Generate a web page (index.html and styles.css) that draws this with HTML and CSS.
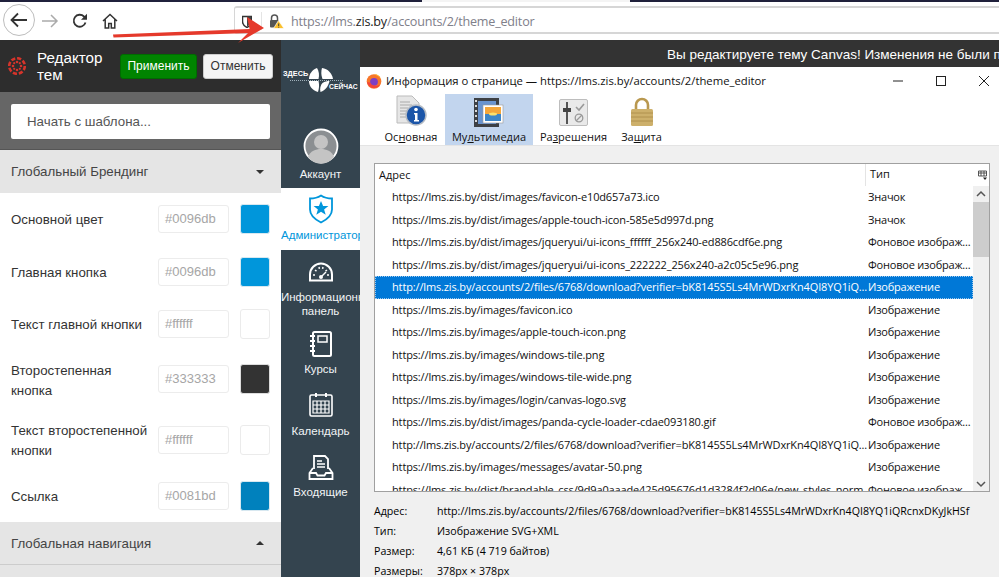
FILE: index.html
```html
<!DOCTYPE html>
<html lang="ru">
<head>
<meta charset="utf-8">
<title>Редактор тем</title>
<link rel="stylesheet" href="styles.css">
</head>
<body>
<div class="screen">
  <div class="strip"><span class="strip-a"></span><span class="strip-gap"></span><span class="strip-b"></span></div>
  <header class="toolbar">
    <button class="back" aria-label="Назад"><svg width="20" height="18" viewBox="0 0 20 18"><path d="M18 9H3M9 2.500 2.500 9 9 15.500" fill="none" stroke="#333" stroke-width="1.800"/></svg></button>
    <svg class="tool forward" width="18" height="16" viewBox="0 0 18 16"><path d="M1 8h15M10 2l6 6-6 6" fill="none" stroke="#aaa" stroke-width="1.500"/></svg>
    <svg class="tool reload" width="16" height="16" viewBox="0 0 16 16"><path d="M13.500 9.500A6 6 0 1 1 12 3.500L14 5" fill="none" stroke="#333" stroke-width="1.800"/><path d="M15 .8v6H9z" fill="#333"/></svg>
    <svg class="tool home" width="16" height="16" viewBox="0 0 16 16"><path d="M1 8l7-6.500L15 8M3.200 6.500V15h3.500v-4.500h2.600V15h3.500V6.500" fill="none" stroke="#333" stroke-width="1.500"/></svg>
    <div class="urlbar">
      <svg class="shield" width="10" height="13" viewBox="0 0 10 13"><path d="M.5 1.500h9v5c0 3-2.500 5-4.500 6-2-1-4.500-3-4.500-6z" fill="none" stroke="#333" stroke-width="1.500"/><path d="M5 1.500h4v5c0 2-1.800 3.800-4 5z" fill="#444"/></svg>
      <span class="urlsep"></span>
      <svg class="lock" width="15" height="15" viewBox="0 0 15 15"><path d="M2.500 6V4a3 3 0 0 1 6 0v2" fill="none" stroke="#555" stroke-width="1.500"/><rect x="1" y="6" width="9" height="7.500" rx="1" fill="#555"/><path d="M9.500 6.500 15 14.500H4.500z" fill="#fbc02d" stroke="#fff" stroke-width=".7"/><path d="M9.700 9.500v2.500M9.700 12.700v.9" stroke="#333" stroke-width=".9"/></svg>
      <span class="url">https://lms.<b>zis.by</b>/accounts/2/theme_editor</span>
    </div>
  </header>

  <div class="app">
    <aside class="editor">
      <div class="editor-head">
        <svg class="canvas-logo" width="18" height="18" viewBox="0 0 18 18"><g fill="#d5342b"><circle cx="9" cy="9" r="7.800" fill="none" stroke="#d5342b" stroke-width="2.600" stroke-dasharray="4.200 1.900"/><circle cx="9" cy="5" r="1.300"/><circle cx="9" cy="13" r="1.300"/><circle cx="5" cy="9" r="1.300"/><circle cx="13" cy="9" r="1.300"/><circle cx="6.200" cy="6.200" r="1.100"/><circle cx="11.800" cy="6.200" r="1.100"/><circle cx="6.200" cy="11.800" r="1.100"/><circle cx="11.800" cy="11.800" r="1.100"/></g></svg>
        <h1 class="editor-title">Редактор тем</h1>
        <button class="btn btn-apply">Применить</button>
        <button class="btn btn-cancel">Отменить</button>
      </div>
      <div class="template-wrap"><div class="template">Начать с шаблона...</div></div>
      <div class="section-head">Глобальный Брендинг<i class="caret"></i></div>
      <div class="fields">
        <div class="field h-a"><span class="field-label">Основной цвет</span><span class="hex">#0096db</span><span class="swatch c-blue"></span></div>
        <div class="field h-b"><span class="field-label">Главная кнопка</span><span class="hex">#0096db</span><span class="swatch c-blue"></span></div>
        <div class="field h-a"><span class="field-label">Текст главной кнопки</span><span class="hex">#ffffff</span><span class="swatch"></span></div>
        <div class="field h-c"><span class="field-label low">Второстепенная кнопка</span><span class="hex">#333333</span><span class="swatch c-dark"></span></div>
        <div class="field h-d"><span class="field-label">Текст второстепенной кнопки</span><span class="hex">#ffffff</span><span class="swatch"></span></div>
        <div class="field h-e"><span class="field-label">Ссылка</span><span class="hex">#0081bd</span><span class="swatch c-link"></span></div>
      </div>
      <div class="section-head section-line">Глобальная навигация<i class="caret up"></i></div>
    </aside>

    <nav class="nav">
      <div class="brand">
        <span class="brand-a">ЗДЕСЬ</span>
        <span class="brand-dots"></span>
        <svg class="brand-mark" width="26" height="24" viewBox="0 0 26 24"><g fill="#fff"><path d="M9 0C4 2 1 6 1 11h9.500C11.500 7 11 3 9 0z"/><path d="M14 0c6 1 10 5 11 11H14.500C13 7 13 3 14 0z"/><path d="M1 13c0 5 3 9 9 11 1-3 1.500-7 .5-11z"/><path d="M14.500 15c2-1.500 5-2 7-2-1 5-4 9-9 11 -1-3 0-7 2-9z"/></g></svg>
        <span class="brand-b">СЕЙЧАС</span>
      </div>
      <a class="nav-item account">
        <svg width="36" height="36" viewBox="0 0 36 36"><circle cx="18" cy="18" r="16.500" fill="#8b8f92" stroke="#fff" stroke-width="1.800"/><circle cx="18" cy="14" r="7" fill="#c4c4c4"/><path d="M5 29c2-6 8-8 13-8s11 2 13 8a16 16 0 0 1-26 0z" fill="#c4c4c4"/></svg>
        <span>Аккаунт</span>
      </a>
      <a class="nav-item active">
        <svg width="26" height="30" viewBox="0 0 26 30"><path d="M13 1.500c3 2 7 3 11 3v11c0 6-5 10-11 13C7 25.500 2 21.500 2 15.500v-11c4 0 8-1 11-3z" fill="none" stroke="#0096db" stroke-width="1.800"/><path d="m13 7 2.100 5h5.300l-4.300 3.400 1.600 5.300-4.700-3-4.700 3 1.600-5.300L5.600 12h5.300z" fill="#0096db"/></svg>
        <span>Администратор</span>
      </a>
      <a class="nav-item dash">
        <svg width="26" height="20" viewBox="0 0 26 20"><path d="M2 18.500v-6a11 11 0 0 1 22 0v6z" fill="none" stroke="#fff" stroke-width="2"/><path d="M5 13h2M19 13h2M7 8l1.500 1.200M19 8l-1.500 1.200M11 5l.4 1.800M15 5l-.4 1.800" stroke="#fff" stroke-width="1.500"/><path d="m18 10-4 4" stroke="#fff" stroke-width="1.500"/><circle cx="13" cy="15" r="2" fill="#fff"/></svg>
        <span>Информационная панель</span>
      </a>
      <a class="nav-item courses">
        <svg width="24" height="26" viewBox="0 0 24 26"><rect x="4" y="1" width="18" height="24" rx="1.500" fill="none" stroke="#fff" stroke-width="2"/><rect x="9" y="5" width="9" height="6" fill="none" stroke="#fff" stroke-width="1.500"/><path d="M1 5h5M1 10h5M1 15h5M1 20h5" stroke="#fff" stroke-width="2"/></svg>
        <span>Курсы</span>
      </a>
      <a class="nav-item calendar">
        <svg width="24" height="25" viewBox="0 0 24 25"><rect x="1" y="3" width="22" height="21" rx="1.500" fill="none" stroke="#fff" stroke-width="1.600"/><path d="M4 9h16v12H4zM8 9v12M12 9v12M16 9v12M4 13h16M4 17h16" fill="none" stroke="#fff" stroke-width="1.200"/><path d="M7 1v4M17 1v4" stroke="#fff" stroke-width="2"/></svg>
        <span>Календарь</span>
      </a>
      <a class="nav-item inbox">
        <svg width="26" height="25" viewBox="0 0 26 25"><path d="M6 14V1h11l3 3v10" fill="none" stroke="#fff" stroke-width="1.800"/><path d="M9 6h5M9 9h8M9 12h8" stroke="#fff" stroke-width="1.300"/><path d="M5 13 1.500 18v6h23v-6L21 13" fill="none" stroke="#fff" stroke-width="1.800"/><path d="M2 18h6l1.500 2.500h7L18 18h6" fill="none" stroke="#fff" stroke-width="1.800"/></svg>
        <span>Входящие</span>
      </a>
    </nav>

    <main class="canvas-main">
      <div class="notice">Вы редактируете тему Canvas! Изменения не были применены</div>
    </main>
  </div>

  <section class="window">
    <div class="titlebar">
      <svg class="fx" width="16" height="16" viewBox="0 0 16 16"><circle cx="8" cy="8.500" r="7.300" fill="#f7762a"/><path d="M8 1c4 0 7.500 3 7.500 7.500 0-3-2-5-4-5.500z" fill="#ffb52c"/><circle cx="8" cy="8.800" r="3.900" fill="#7d3fc4"/><path d="M1 9c1 4 4 6 7 6s5-1.500 6-3.500c-3 2-8 2-10-2z" fill="#f2453a"/></svg>
      <span class="win-title">Информация о странице — https://lms.zis.by/accounts/2/theme_editor</span>
      <span class="win-btns">
        <svg width="10" height="10" viewBox="0 0 10 10"><path d="M0 5h10" stroke="#222"/></svg>
        <svg width="10" height="10" viewBox="0 0 10 10"><rect x=".5" y=".5" width="9" height="9" fill="none" stroke="#222"/></svg>
        <svg width="10" height="10" viewBox="0 0 10 10"><path d="m0 0 10 10M10 0 0 10" stroke="#222"/></svg>
      </span>
    </div>
    <div class="tabs">
      <div class="tab t1">
        <svg width="32" height="32" viewBox="0 0 32 32"><path d="M2 1h15l7 7v20H2z" fill="#e6e6e6" stroke="#bbb"/><path d="M5 7h10M5 10h12M5 13h8M5 16h8M5 19h8M5 22h8" stroke="#aaa"/><circle cx="21" cy="20" r="10" fill="#1b55a8" stroke="#b6bcc4" stroke-width="1.500"/><circle cx="21" cy="14.500" r="1.800" fill="#fff"/><path d="M19 18h3.500v7H24v1.500h-5V25h1v-5.500h-1z" fill="#fff"/></svg>
        <span>Ос<u>н</u>овная</span>
      </div>
      <div class="tab t2 selected">
        <svg width="30" height="30" viewBox="0 0 30 30"><rect x="0" y="1" width="25" height="29" fill="#3d4045"/><rect x="4" y="4" width="18" height="23" fill="#6a94cf"/><g fill="#d9d9d9"><rect x="1" y="3" width="2" height="2"/><rect x="1" y="8" width="2" height="2"/><rect x="1" y="13" width="2" height="2"/><rect x="1" y="18" width="2" height="2"/><rect x="1" y="23" width="2" height="2"/></g><rect x="9" y="8" width="20" height="18" fill="#fff" stroke="#999" stroke-width=".6"/><rect x="11" y="10" width="16" height="7" fill="#f5a63a"/><rect x="11" y="17" width="16" height="7" fill="#3e86c8"/><ellipse cx="19" cy="17" rx="4" ry="1.500" fill="#fde06b"/></svg>
        <span>Му<u>л</u>ьтимедиа</span>
      </div>
      <div class="tab t3">
        <svg width="30" height="28" viewBox="0 0 30 28"><rect x=".5" y=".5" width="28" height="26" rx="1.500" fill="#e9e9e9" stroke="#bdbdbd"/><path d="M8 3v22" stroke="#555" stroke-width="2"/><rect x="4" y="9" width="8" height="4" fill="#444"/><path d="m17 8 3 3 5-6" fill="none" stroke="#999" stroke-width="1.600"/><circle cx="20" cy="19" r="3.800" fill="none" stroke="#999" stroke-width="1.300"/><path d="m17 22 6-6" stroke="#999" stroke-width="1.300"/></svg>
        <span>Ра<u>з</u>решения</span>
      </div>
      <div class="tab t4">
        <svg width="24" height="30" viewBox="0 0 24 30"><path d="M6 13V8a6 6 0 0 1 12 0v5" fill="none" stroke="#b9984f" stroke-width="2.600"/><rect x="1" y="12" width="22" height="17" rx="1.500" fill="#cdb06b"/><path d="M1 16h22M1 20h22M1 24h22" stroke="#a88b47" stroke-width=".8"/></svg>
        <span>За<u>щ</u>ита</span>
      </div>
    </div>
    <div class="win-body">
      <div class="list">
        <div class="list-head"><span class="col-addr">Адрес</span><span class="col-type">Тип</span><svg class="col-pick" width="10" height="10" viewBox="0 0 10 10"><path d="M.5 1h8v5h-8zM.5 3h8M3 1v5M6 1v5" fill="none" stroke="#444" stroke-width=".9"/><path d="M5 7.500h4L7 10z" fill="#222"/></svg></div>
        <div class="list-main">
          <div class="rows">
            <div class="row"><span class="cell-addr">https://lms.zis.by/dist/images/favicon-e10d657a73.ico</span><span class="cell-type">Значок</span></div>
            <div class="row"><span class="cell-addr">https://lms.zis.by/dist/images/apple-touch-icon-585e5d997d.png</span><span class="cell-type">Значок</span></div>
            <div class="row"><span class="cell-addr">https://lms.zis.by/dist/images/jqueryui/ui-icons_ffffff_256x240-ed886cdf6e.png</span><span class="cell-type">Фоновое изображ...</span></div>
            <div class="row"><span class="cell-addr">https://lms.zis.by/dist/images/jqueryui/ui-icons_222222_256x240-a2c05c5e96.png</span><span class="cell-type">Фоновое изображ...</span></div>
            <div class="row current"><span class="cell-addr">http://lms.zis.by/accounts/2/files/6768/download?verifier=bK8145S5Ls4MrWDxrKn4QI8YQ1iQ...</span><span class="cell-type">Изображение</span></div>
            <div class="row"><span class="cell-addr">https://lms.zis.by/images/favicon.ico</span><span class="cell-type">Изображение</span></div>
            <div class="row"><span class="cell-addr">https://lms.zis.by/images/apple-touch-icon.png</span><span class="cell-type">Изображение</span></div>
            <div class="row"><span class="cell-addr">https://lms.zis.by/images/windows-tile.png</span><span class="cell-type">Изображение</span></div>
            <div class="row"><span class="cell-addr">https://lms.zis.by/images/windows-tile-wide.png</span><span class="cell-type">Изображение</span></div>
            <div class="row"><span class="cell-addr">https://lms.zis.by/images/login/canvas-logo.svg</span><span class="cell-type">Изображение</span></div>
            <div class="row"><span class="cell-addr">https://lms.zis.by/dist/images/panda-cycle-loader-cdae093180.gif</span><span class="cell-type">Фоновое изображ...</span></div>
            <div class="row"><span class="cell-addr">http://lms.zis.by/accounts/2/files/6768/download?verifier=bK8145S5Ls4MrWDxrKn4QI8YQ1iQ...</span><span class="cell-type">Изображение</span></div>
            <div class="row"><span class="cell-addr">https://lms.zis.by/images/messages/avatar-50.png</span><span class="cell-type">Изображение</span></div>
            <div class="row"><span class="cell-addr">https://lms.zis.by/dist/brandable_css/9d9a0aaade425d95676d1d3284f2d06e/new_styles_norm...</span><span class="cell-type">Фоновое изображ...</span></div>
          </div>
          <div class="scrollbar">
            <svg width="16" height="16" viewBox="0 0 16 16"><path d="m4 10 4-4 4 4" fill="none" stroke="#555" stroke-width="1.500"/></svg>
            <div class="thumb"></div>
            <div class="track"></div>
            <svg width="16" height="16" viewBox="0 0 16 16"><path d="m4 6 4 4 4-4" fill="none" stroke="#555" stroke-width="1.500"/></svg>
          </div>
        </div>
      </div>
      <dl class="details">
        <dt>Адрес:</dt><dd>http://lms.zis.by/accounts/2/files/6768/download?verifier=bK8145S5Ls4MrWDxrKn4QI8YQ1iQRcnxDKyJkHSf</dd>
        <dt>Тип:</dt><dd>Изображение SVG+XML</dd>
        <dt>Размер:</dt><dd>4,61 КБ (4 719 байтов)</dd>
        <dt>Размеры:</dt><dd>378px × 378px</dd>
      </dl>
    </div>
  </section>

  <svg class="arrow" width="160" height="34" viewBox="0 0 160 34"><path d="M0 19.500 137 14v4L.5 22.500z" fill="#e5392b"/><path d="M151 13 125 28l12-12-3-14z" fill="#e5392b"/></svg>
</div>
</body>
</html>
```

FILE: styles.css
```css
* { box-sizing: border-box; }
html, body { margin: 0; padding: 0; }
body { font-family: "Liberation Sans", Arial, sans-serif; background: #fff; overflow: hidden; }
.screen { position: relative; width: 999px; height: 577px; overflow: hidden; display: flex; flex-direction: column; }

.strip { display: flex; height: 2px; background: #f4f4f4; flex: none; }
.strip-a { width: 422px; background: #20213c; }
.strip-gap { width: 208px; }
.strip-b { flex: 1; background: #20213c; }

.toolbar { height: 38px; flex: none; display: flex; align-items: flex-start; background: #fff; padding-left: 3px; }
.back { width: 32px; height: 32px; margin-top: 2px; border: 1px solid #bdbdbd; border-radius: 50%; background: #fff; padding: 0; display: flex; align-items: center; justify-content: center; }
.tool { flex: none; margin-top: 11px; }
.forward { margin-left: 6px; }
.reload { margin-left: 13px; }
.home { margin-left: 14px; }
.urlbar { margin-left: 116px; flex: 1; height: 28px; margin-top: 4px; border: 1px solid #d6d6d6; border-width: 2px 0 2px 1px; border-radius: 3px 0 0 3px; display: flex; align-items: center; padding: 2px 0 0 7px; }
.shield { flex: none; }
.urlsep { width: 1px; height: 18px; background: #e4e4e4; margin-left: 9px; }
.lock { flex: none; margin-left: 7px; }
.url { margin-left: 7px; font-family: "Open Sans", sans-serif; font-size: 12.600px; letter-spacing: -.2px; color: #80808a; white-space: nowrap; }
.url b { font-weight: 400; color: #222; }

.app { flex: 1; min-height: 0; display: flex; }
.editor { width: 281px; flex: none; background: #e5e5e5; display: flex; flex-direction: column; }
.editor-head { height: 52px; flex: none; background: #2d2d2d; display: flex; align-items: center; padding: 0 8px; }
.canvas-logo { flex: none; }
.editor-title { width: 83px; margin: 0 0 0 11px; font-size: 15.200px; font-weight: 400; line-height: 17px; color: #fff; }
.btn { font-family: inherit; font-size: 12px; border-radius: 3px; padding: 0; height: 25px; }
.btn-apply { width: 77px; background: #008400; border: 1px solid #006b00; color: #fff; }
.btn-cancel { width: 70px; margin-left: 6px; background: #f5f5f5; border: 1px solid #ccc; color: #333; }
.template-wrap { height: 58px; flex: none; background: #666; padding: 12px 11px 11px; border-bottom: 1px solid #555; }
.template { height: 35px; background: #fff; border-radius: 2px; padding-left: 16px; font-size: 13.300px; line-height: 35px; color: #555; }
.section-head { height: 43px; flex: none; display: flex; align-items: center; justify-content: space-between; padding: 0 17px 0 11px; font-size: 13.300px; color: #444; }
.section-line { border-bottom: 1px solid #ccc; }
.caret { width: 0; height: 0; border: 4px solid transparent; border-top-color: #333; border-bottom-width: 0; }
.caret.up { border-top-width: 0; border-bottom: 4px solid #333; }
.fields { background: #fff; display: flex; flex-direction: column; height: 329px; flex: none; }
.field { display: flex; align-items: center; padding: 0 11px; }
.h-a { height: 52px; }
.h-b { height: 53px; }
.h-c { height: 58px; }
.h-d { height: 64px; }
.h-e { height: 48px; }
.field-label { width: 147px; flex: none; padding-right: 7px; font-size: 13.300px; line-height: 20px; color: #333; position: relative; top: 1px; }
.field-label.low { top: 2px; }
.hex { width: 71px; height: 28px; flex: none; border: 1px solid #ececec; border-radius: 3px; font-size: 13px; line-height: 26px; padding-left: 6px; color: #a6a6a6; }
.swatch { width: 30px; height: 30px; flex: none; margin-left: 11px; border: 1px solid #ebebeb; border-radius: 3px; background: #fff; }
.c-blue { background: #0096db; border-color: #d8e8f0; }
.c-dark { background: #333; border-color: #ddd; }
.c-link { background: #0081bd; border-color: #d8e8f0; }

.nav { width: 79px; flex: none; background: #34444f; display: flex; flex-direction: column; align-items: stretch; color: #fff; }
.brand { height: 63px; position: relative; flex: none; font-size: 7.300px; font-weight: 700; line-height: 8px; }
.brand-a { position: absolute; left: 2px; top: 30px; }
.brand-b { position: absolute; left: 48px; top: 43px; font-size: 6.800px; }
.brand-dots { position: absolute; left: 9px; right: 17px; top: 40px; border-top: 1px dotted #9fb0ba; }
.brand-mark { position: absolute; left: 27px; top: 28px; }
.nav-item { display: flex; flex-direction: column; align-items: center; text-align: center; font-size: 11.500px; line-height: 13px; color: #f2f5f6; flex: none; overflow: hidden; }
.nav-item span { width: 100%; }
.account { height: 85px; padding-top: 25px; gap: 4px; }
.active { height: 62px; background: #fff; color: #0096db; padding-top: 6px; gap: 5px; white-space: nowrap; }
.dash { height: 81px; padding-top: 12px; gap: 9px; line-height: 13.500px; }
.courses { height: 61px; padding-top: 0; gap: 6px; }
.calendar { height: 63px; padding-top: 0; gap: 8px; }
.inbox { height: 50px; padding-top: 0; gap: 6px; }

.canvas-main { flex: 1; background: #f5f5f5; }
.notice { height: 27px; background: #333; color: #fff; font-size: 13.500px; line-height: 24px; padding: 3px 0 0 307px; white-space: nowrap; overflow: hidden; }

.window { position: absolute; left: 360px; top: 67px; width: 639px; height: 510px; background: #f0f0f0; font-family: "Open Sans", "Noto Sans", sans-serif; font-size: 11px; color: #111; }
.titlebar { height: 27px; background: #fff; display: flex; align-items: center; padding-left: 6px; }
.fx { flex: none; }
.win-title { margin-left: 4px; white-space: nowrap; font-size: 11.300px; }
.win-btns { margin-left: auto; display: flex; gap: 33px; padding-right: 10px; }
.win-btns svg { flex: none; }
.tabs { height: 52px; background: #fff; border-bottom: 1px solid #e4e4e4; display: flex; padding-left: 17px; }
.tab { display: flex; flex-direction: column; align-items: center; justify-content: flex-end; padding-bottom: 1px; font-size: 11px; line-height: 15px; gap: 2px; }
.tab svg { flex: none; }
.t1 { width: 68px; }
.t2 { width: 88px; }
.t3 { width: 81px; }
.t4 { width: 55px; }
.selected { background: #c2d5ee; }
.win-body { padding: 17px 9px 0 14px; }
.list { height: 329px; border: 1px solid #a0a0a0; background: #fff; overflow: hidden; }
.list-head { height: 22px; display: flex; align-items: center; position: relative; }
.col-addr { padding-left: 4px; width: 490px; line-height: 20px; }
.col-type { padding-left: 4px; border-left: 1px solid #e4e4e4; height: 22px; line-height: 20px; }
.col-pick { position: absolute; right: 1px; top: 6px; }
.list-main { display: flex; height: 306px; }
.rows { flex: 1; min-width: 0; }
.row { height: 22.500px; display: flex; align-items: center; line-height: 22px; }
.cell-addr { width: 493px; padding-left: 17px; white-space: nowrap; overflow: hidden; flex: none; letter-spacing: -.14px; }
.cell-type { width: 105px; white-space: nowrap; overflow: hidden; flex: none; letter-spacing: -.2px; }
.current { background: #0078d7; color: #fff; outline: 1px dotted #9cc8ee; outline-offset: -1px; }
.scrollbar { width: 16px; flex: none; background: #f0f0f0; display: flex; flex-direction: column; }
.scrollbar svg { flex: none; }
.thumb { height: 55px; background: #cdcdcd; flex: none; }
.track { flex: 1; }
.details { margin: 9px 0 0; display: grid; grid-template-columns: 63px 1fr; grid-auto-rows: 20px; line-height: 20px; font-size: 10.650px; color: #000; }
.details dt, .details dd { margin: 0; white-space: nowrap; }

.arrow { position: absolute; left: 113px; top: 15px; }
```
